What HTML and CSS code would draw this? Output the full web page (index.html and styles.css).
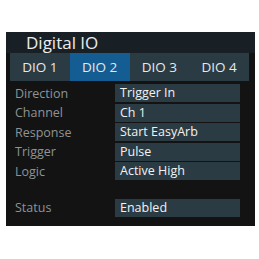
FILE: index.html
```html
<!DOCTYPE html>
<html lang="en">
<head>
    <meta charset="UTF-8">
    <title>Digital IO</title>
    <link rel="stylesheet" href="styles.css">
</head>
<body>

<div class="panel">
    <div class="panel-title">Digital IO</div>
    <div class="tabs">
        <div class="tab">DIO 1</div>
        <div class="tab active">DIO 2</div>
        <div class="tab">DIO 3</div>
        <div class="tab">DIO 4</div>
    </div>
    <div class="settings">
        <div class="row"><span class="label">Direction</span><span class="value">Trigger In</span></div>
        <div class="row"><span class="label">Channel</span><span class="value">Ch 1</span></div>
        <div class="row"><span class="label">Response</span><span class="value">Start EasyArb</span></div>
        <div class="row"><span class="label">Trigger</span><span class="value">Pulse</span></div>
        <div class="row"><span class="label">Logic</span><span class="value">Active High</span></div>
        <div class="row status"><span class="label">Status</span><span class="value">Enabled</span></div>
    </div>
</div>

</body>
</html>
```

FILE: styles.css
```css
* {
    box-sizing: border-box;
    margin: 0;
    padding: 0;
}

body {
    background: #fff;
    font-family: 'Open Sans', 'Noto Sans', sans-serif;
}

.panel {
    margin: 32px 0 0 6px;
    width: 249px;
    height: 194px;
    background: #131313;
}

.panel-title {
    height: 21px;
    padding-left: 20px;
    background: #182026;
    color: #ececec;
    font-size: 17px;
    line-height: 21px;
}

.tabs {
    display: flex;
    height: 28px;
    margin: 0 6px 0 4px;
    background: #2b3b43;
}

.tab {
    flex: 1;
    text-align: center;
    color: #e8e8e8;
    font-size: 13.5px;
    line-height: 28px;
}

.tab.active {
    background: #145d93;
}

.settings {
    display: flex;
    flex-direction: column;
    gap: 1.5px;
    padding-top: 3px;
}

.row {
    display: flex;
    align-items: center;
    height: 18px;
}

.row.status {
    margin-top: 17px;
}

.label {
    width: 109px;
    padding-left: 9px;
    color: #8e9396;
    font-size: 12.5px;
}

.value {
    width: 125px;
    height: 18px;
    padding-left: 5px;
    background: #2b3b43;
    color: #f2f2f2;
    font-size: 12.5px;
    line-height: 18px;
}
```
